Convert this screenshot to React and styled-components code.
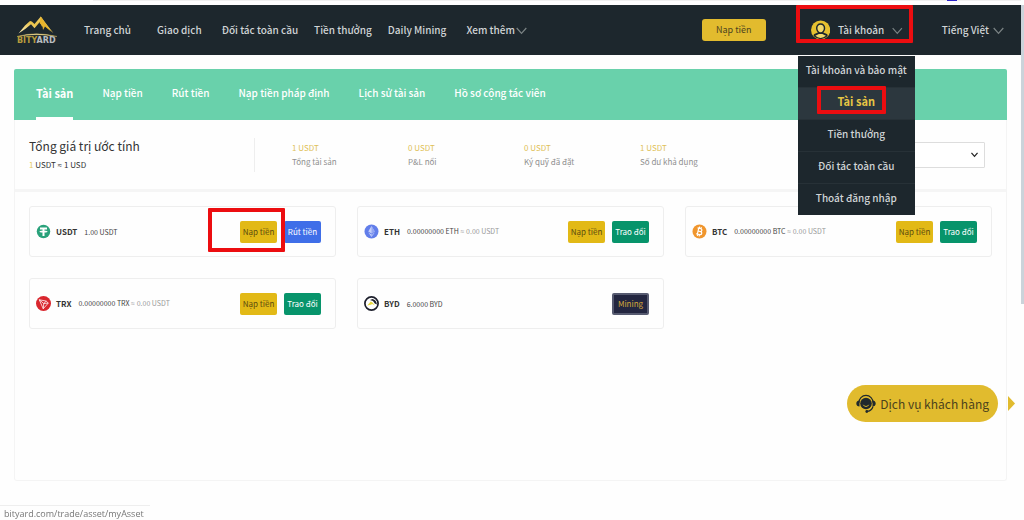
import React from "react";
import styled, { createGlobalStyle, css } from "styled-components";

const Global = createGlobalStyle`
  * { box-sizing: border-box; }
  body {
    margin: 0;
    background: #fefefe;
    color: #333;
    font-family: "Noto Sans CJK SC", "Noto Sans", sans-serif;
    font-size: 10px;
    line-height: 16px;
  }
  a { color: inherit; text-decoration: none; }
  button, select { font-family: inherit; }
  ul { list-style: none; margin: 0; padding: 0; }
`;

const Page = styled.div`
  position: relative;
  display: flex;
  flex-direction: column;
  min-height: 100vh;
  padding: 0 3px 39px 0;
`;

const WindowEdge = styled.div`
  display: flex;
  justify-content: flex-end;
  height: 5px;
  margin-left: 93px;
  padding-right: 64px;
  border-top: 1px solid #efefef;
`;

const EdgeMark = styled.span`
  width: 10px;
  height: 1px;
  margin-top: -1px;
  background: #2a22c8;
`;

const Scrollbar = styled.div`
  position: absolute;
  top: 5px;
  right: 0;
  width: 3px;
  height: 299px;
  background: #cbd3da;
`;

const Header = styled.header`
  display: flex;
  align-items: center;
  height: 50px;
  padding: 0 17px 0 16px;
  background: #1d272d;
  color: #d0d4d6;
  font-weight: 500;
`;

const Logo = styled.a`
  display: flex;
  width: 42px;
  margin-right: 26px;
`;

const Nav = styled.nav`
  display: flex;
  flex: 1;
  white-space: nowrap;
`;

const NavLink = styled.a`
  display: flex;
  align-items: center;
  gap: ${(p) => p.$inner || 1}px;
  margin-right: ${(p) => p.$gap || 0}px;
  white-space: nowrap;
`;

const DepositButton = styled.button`
  width: 64px;
  height: 22px;
  padding: 0;
  border: 0;
  border-radius: 3px;
  background: #e2bb2e;
  color: #4d4420;
  font-size: 9px;
  line-height: 16px;
`;

const Account = styled.div`
  position: relative;
  align-self: stretch;
  width: 117px;
  margin: 0 27px 0 32px;
`;

const AccountButton = styled.button`
  display: flex;
  align-items: center;
  gap: 8px;
  width: 100%;
  height: 100%;
  padding: 0 12px 0 13px;
  border: 0;
  background: none;
  color: inherit;
  font-size: 10px;
  font-weight: 500;
  line-height: 16px;
  white-space: nowrap;
`;

const Menu = styled.ul`
  position: absolute;
  top: 51px;
  left: 0;
  z-index: 2;
  width: 100%;
  background: #1d272d;
  white-space: nowrap;
`;

const MenuItem = styled.li`
  position: relative;
  padding-bottom: 4px;
  border-top: 1px solid #273137;
  text-align: center;
  line-height: 27px;
  &:first-child { border-top: 0; }
  ${(p) => p.$active && css`
    background: #2c373e;
    color: #e6c544;
    font-size: 11px;
    font-weight: 700;
  `}
`;

const Highlight = styled.span`
  position: absolute;
  top: ${(p) => p.$top}px;
  left: ${(p) => p.$left}px;
  z-index: 3;
  width: ${(p) => p.$width}px;
  height: ${(p) => p.$height}px;
  border: 4px solid #ec0d10;
  border-radius: 1px;
  pointer-events: none;
`;

const Panel = styled.main`
  display: flex;
  flex-direction: column;
  flex: 1;
  margin: 14px 14px 0;
  border: 1px solid #f4f4f4;
  border-top: 0;
  border-radius: 3px;
`;

const Tabs = styled.nav`
  display: flex;
  gap: 29px;
  height: 51px;
  margin: 0 -1px;
  padding: 0 22px;
  border-radius: 2px 2px 0 0;
  background: #69d1ab;
  color: #fff;
  font-weight: 500;
  white-space: nowrap;
`;

const Tab = styled.a`
  border-bottom: 3px solid transparent;
  line-height: 48px;
  ${(p) => p.$active && css`
    border-color: #fff;
    font-size: 11px;
    font-weight: 700;
  `}
`;

const Summary = styled.section`
  display: flex;
  align-items: center;
  height: 72px;
  padding: 0 21px 0 14px;
  border-bottom: 3px solid #f5f5f5;
`;

const Total = styled.div`
  width: 226px;
  border-right: 1px solid #eee;
  font-size: 8px;
  line-height: 14px;
`;

const Title = styled.h1`
  margin: 0 0 4px;
  font-size: 12px;
  font-weight: 400;
  line-height: 16px;
`;

const Gold = styled.span`
  color: #e6c95c;
`;

const Sign = styled.span`
  font-family: "Open Sans", sans-serif;
`;

const Stats = styled.dl`
  display: grid;
  grid-template-columns: repeat(4, 116px);
  flex: 1;
  margin: 0 0 0 37px;
  font-size: 8px;
  line-height: 14px;
`;

const Stat = styled.div`
  display: flex;
  flex-direction: column-reverse;
`;

const StatValue = styled.dd`
  margin: 0;
  color: #e0c158;
`;

const StatLabel = styled.dt`
  color: #8f8f8f;
`;

const SelectBox = styled.label`
  position: relative;
  display: flex;
  align-items: center;
  width: 175px;
`;

const CoinSelect = styled.select`
  width: 100%;
  height: 26px;
  border: 1px solid #ddd;
  border-radius: 1px;
  background: #fff;
  color: #333;
  font-size: 10px;
  appearance: none;
`;

const SelectArrow = styled.span`
  position: absolute;
  right: 7px;
  display: flex;
  pointer-events: none;
`;

const Cards = styled.section`
  display: grid;
  grid-template-columns: repeat(3, 1fr);
  gap: 21px;
  padding: 14px 14px 0;
`;

const Card = styled.article`
  position: relative;
  display: flex;
  align-items: center;
  height: 51px;
  padding: 0 14px 0 6px;
  border: 1px solid #eee;
  border-radius: 3px;
  white-space: nowrap;
`;

const CoinName = styled.h2`
  margin: 0 7px 0 5px;
  font-size: 8px;
  font-weight: 700;
  line-height: 16px;
`;

const Amount = styled.p`
  flex: 1;
  margin: 0;
  color: #444;
  font-size: 7px;
`;

const Approx = styled.span`
  color: #999;
`;

const tones = {
  gold: "background: #e2b916; color: #5a4a10;",
  blue: "background: #3f6ee8; color: #fff;",
  green: "background: #07946b; color: #fff;",
  dark: "background: #232640; color: #d5a63a; border: 2px solid #565a70;",
};

const ActionButton = styled.button`
  width: 37px;
  height: 22px;
  margin-left: 7px;
  padding: 0;
  border: 0;
  border-radius: 2px;
  font-size: 8px;
  line-height: 16px;
  ${(p) => tones[p.$tone]}
`;

const Support = styled.div`
  position: fixed;
  right: 9px;
  bottom: 98px;
  display: flex;
  align-items: center;
  gap: 10px;
`;

const SupportButton = styled.button`
  display: flex;
  align-items: center;
  gap: 4px;
  height: 37px;
  padding: 0 9px;
  border: 0;
  border-radius: 19px;
  background: #e1bb2e;
  color: #4b421c;
  font-size: 12px;
  line-height: 20px;
`;

const StatusBar = styled.div`
  position: fixed;
  left: 0;
  bottom: 0;
  width: 150px;
  height: 15px;
  padding-left: 4px;
  border-top: 1px solid #eee;
  color: #777;
  font-family: "Open Sans", sans-serif;
  font-size: 9px;
  line-height: 16px;
`;

const Chevron = ({ width = 11, color = "#7b8384", weight = 1.2 }) => (
  <svg width={width} height={width} viewBox="0 0 11 11" fill="none" stroke={color} strokeWidth={weight} aria-hidden="true">
    <path d="M.7 3 5.5 8.4 10.3 3" />
  </svg>
);

const BrandLogo = () => (
  <svg width="42" height="30" viewBox="0 0 42 30" role="img" aria-label="Bityard">
    <defs>
      <linearGradient id="peak" x1="0" y1="1" x2="1" y2="0">
        <stop offset="0" stopColor="#fff3c4" />
        <stop offset=".5" stopColor="#e9c24a" />
        <stop offset="1" stopColor="#f0d479" />
      </linearGradient>
    </defs>
    <path d="M2.500 18.500 9 10.500l5-4.500 1.800.5L18.500 9 24.800 1.500l4 5.500 8.700 11.300-9-8-2.500 1.500-2-5-5.500 6.500-3.500-4-5.500 4.500z" fill="url(#peak)" />
    <path d="M24.800 1.500 23.500 8l3 3 .5 4 2-3.500 6 5-6-9z" fill="#e9b52c" />
    <path d="M1 21.500Q20 16.200 41 21.500 20 17.800 1 21.500z" fill="#f5e5a8" stroke="#d9bd62" strokeWidth=".4" />
    <text x="1" y="28" fontFamily="DejaVu Sans, sans-serif" fontSize="8" fontWeight="700" fill="#b59b3d">
      BITY<tspan fill="#b8bcc0">ARD</tspan>
    </text>
  </svg>
);

const Avatar = () => (
  <svg width="20" height="20" viewBox="0 0 20 20" aria-hidden="true">
    <circle cx="10" cy="10" r="10" fill="#e6c12f" />
    <path d="M10 3c3 0 4.800 2.200 4.800 5 0 2-.8 3.600-2 4.500l3.700 1.700c.9.500 1 1.600.5 2.300A9.500 9.500 0 0 1 10 19.500a9.500 9.500 0 0 1-7-3c-.5-.7-.4-1.800.5-2.300l3.700-1.700c-1.200-.9-2-2.500-2-4.500 0-2.800 1.800-5 4.800-5z" fill="#1d272d" />
    <path d="M10 4.600c2.200 0 3.300 1.600 3.300 3.500 0 2.300-1.400 4.200-3.300 4.200s-3.300-1.900-3.300-4.200c0-1.900 1.100-3.500 3.300-3.500zM4.500 16l3.700-1.800h3.600l3.700 1.800a8 8 0 0 1-11 0z" fill="#f1d96c" />
  </svg>
);

const Headset = () => (
  <svg width="20" height="20" viewBox="0 0 20 20" aria-hidden="true">
    <circle cx="10" cy="9.500" r="5.800" fill="#1f292d" />
    <path d="M2.800 9a7.200 7.700 0 0 1 14.400 0" fill="none" stroke="#1f292d" strokeWidth="1.200" />
    <path d="M3.500 6.500v6C1.600 12.500.3 11.300.3 9.500s1.300-3 3.200-3zm13 0v6c1.900 0 3.200-1.200 3.200-3s-1.300-3-3.200-3z" fill="#1f292d" />
    <path d="M17 12.500c-.8 2.700-2.800 4.400-5.500 4.900" fill="none" stroke="#1f292d" strokeWidth="1.200" />
    <circle cx="10.800" cy="17.500" r="1.400" fill="#1f292d" />
    <path d="M7.300 10.800a3 3 0 0 0 5.400 0" fill="none" stroke="#e1bb2e" strokeWidth=".9" />
  </svg>
);

const CoinIcon = ({ coin }) => (
  <svg width="15" height="15" viewBox="0 0 30 30" aria-hidden="true">
    {coin === "USDT" && (
      <>
        <circle cx="15" cy="15" r="13.500" fill="#2aa27b" />
        <path d="M8 7h14v4h-5v2.500c4 .2 6 .8 6 1.800s-2 1.500-6 1.700V24h-4v-7c-4-.2-6-.7-6-1.700s2-1.600 6-1.800V11H8z" fill="#fff" />
      </>
    )}
    {coin === "ETH" && (
      <>
        <circle cx="15" cy="15" r="14" fill="#627eea" />
        <path d="m15 4-6.500 11L15 19l6.500-4zM8.500 17 15 26l6.500-9-6.500 4z" fill="#c4cffa" />
        <path d="M15 4v15l6.500-4zM15 21v5l6.500-9z" fill="#93a6f2" />
      </>
    )}
    {coin === "BTC" && (
      <>
        <circle cx="15" cy="15" r="14" fill="#f0962e" />
        <g transform="rotate(14 15 15)" fill="none" stroke="#fff" strokeWidth="2.400">
          <path d="M9.500 9H16c4 0 4 5.700 0 5.700h-4M9.500 21H17c4.300 0 4.300-6.300 0-6.300M12 9v12M13 5.500V9M16.500 5.500V9M13 21v3.500M16.500 21v3.500" />
        </g>
      </>
    )}
    {coin === "TRX" && (
      <>
        <circle cx="15" cy="15" r="15" fill="#d9272e" />
        <path d="m6.500 7.500 14 2.700 4 4-10 11.300zM6.500 7.500 15.500 15l-1 10.500M15.500 15l5-4.800M15.500 15l9-.8" fill="none" stroke="#fff" strokeWidth="1.500" strokeLinejoin="round" />
      </>
    )}
    {coin === "BYD" && (
      <>
        <circle cx="15" cy="15" r="13.200" fill="#fff" stroke="#1d1f2c" strokeWidth="3.400" />
        <path d="m12 8 5-2c5 1 8 5 9 11l-4.500-2-3.500-5z" fill="#1d1f2c" />
        <path d="m6.500 19 7-8 3.500 2 5 6-5.500-3-3 1.500z" fill="#e8d83c" />
      </>
    )}
  </svg>
);

const navItems = [
  { label: "Trang chủ", gap: 26 },
  { label: "Giao dịch", gap: 20 },
  { label: "Đối tác toàn cầu", gap: 16 },
  { label: "Tiền thưởng", gap: 16 },
  { label: "Daily Mining", gap: 20 },
  { label: "Xem thêm", more: true },
];

const menuItems = ["Tài khoản và bảo mật", "Tài sản", "Tiền thưởng", "Đối tác toàn cầu", "Thoát đăng nhập"];

const tabs = ["Tài sản", "Nạp tiền", "Rút tiền", "Nạp tiền pháp định", "Lịch sử tài sản", "Hồ sơ cộng tác viên"];

const stats = [
  ["1 USDT", "Tổng tài sản"],
  ["0 USDT", "P&L nổi"],
  ["0 USDT", "Ký quỹ đã đặt"],
  ["1 USDT", "Số dư khả dụng"],
];

const deposit = { label: "Nạp tiền", tone: "gold" };
const withdraw = { label: "Rút tiền", tone: "blue" };
const swap = { label: "Trao đổi", tone: "green" };
const mining = { label: "Mining", tone: "dark" };

const coins = [
  { coin: "USDT", amount: "1.00 USDT", actions: [deposit, withdraw], marked: true },
  { coin: "ETH", amount: "0.00000000 ETH", approx: "0.00 USDT", actions: [deposit, swap] },
  { coin: "BTC", amount: "0.00000000 BTC", approx: "0.00 USDT", actions: [deposit, swap] },
  { coin: "TRX", amount: "0.00000000 TRX", approx: "0.00 USDT", actions: [deposit, swap] },
  { coin: "BYD", amount: "6.0000 BYD", actions: [mining] },
];

export default function App() {
  return (
    <>
      <Global />
      <Page>
        <WindowEdge><EdgeMark /></WindowEdge>
        <Header>
          <Logo href="#"><BrandLogo /></Logo>
          <Nav>
            {navItems.map((n) => (
              <NavLink key={n.label} href="#" $gap={n.gap}>
                {n.label}
                {n.more && <Chevron />}
              </NavLink>
            ))}
          </Nav>
          <DepositButton>Nạp tiền</DepositButton>
          <Account>
            <AccountButton>
              <Avatar />
              Tài khoản
              <Chevron />
            </AccountButton>
            <Highlight $top={0} $left={-2} $width={117} $height={38} />
            <Menu>
              {menuItems.map((m) => (
                <MenuItem key={m} $active={m === "Tài sản"}>
                  <a href="#">{m}</a>
                  {m === "Tài sản" && <Highlight $top={-2} $left={19} $width={69} $height={28} />}
                </MenuItem>
              ))}
            </Menu>
          </Account>
          <NavLink href="#" $inner={4}>
            Tiếng Việt
            <Chevron />
          </NavLink>
        </Header>

        <Panel>
          <Tabs>
            {tabs.map((t) => (
              <Tab key={t} href="#" $active={t === "Tài sản"}>{t}</Tab>
            ))}
          </Tabs>
          <Summary>
            <Total>
              <Title>Tổng giá trị ước tính</Title>
              <Gold>1</Gold> USDT <Sign>≈</Sign> 1 USD
            </Total>
            <Stats>
              {stats.map(([value, label]) => (
                <Stat key={label}>
                  <StatLabel>{label}</StatLabel>
                  <StatValue>{value}</StatValue>
                </Stat>
              ))}
            </Stats>
            <SelectBox>
              <CoinSelect aria-label="USDT" defaultValue="">
                <option value="" />
              </CoinSelect>
              <SelectArrow><Chevron width={7} color="#222" weight={2} /></SelectArrow>
            </SelectBox>
          </Summary>
          <Cards>
            {coins.map((c) => (
              <Card key={c.coin}>
                <CoinIcon coin={c.coin} />
                <CoinName>{c.coin}</CoinName>
                <Amount>
                  {c.amount}
                  {c.approx && <Approx> <Sign>≈</Sign> {c.approx}</Approx>}
                </Amount>
                {c.actions.map((a) => (
                  <ActionButton key={a.label} $tone={a.tone}>{a.label}</ActionButton>
                ))}
                {c.marked && <Highlight $top={1} $left={178} $width={77} $height={44} />}
              </Card>
            ))}
          </Cards>
        </Panel>
        <Scrollbar />
      </Page>
      <Support>
        <SupportButton>
          <Headset />
          Dịch vụ khách hàng
        </SupportButton>
        <svg width="7" height="15" viewBox="0 0 7 15" aria-hidden="true">
          <path d="M0 0 7 7.500 0 15z" fill="#e1bb2e" />
        </svg>
      </Support>
      <StatusBar>bityard.com/trade/asset/myAsset</StatusBar>
    </>
  );
}
